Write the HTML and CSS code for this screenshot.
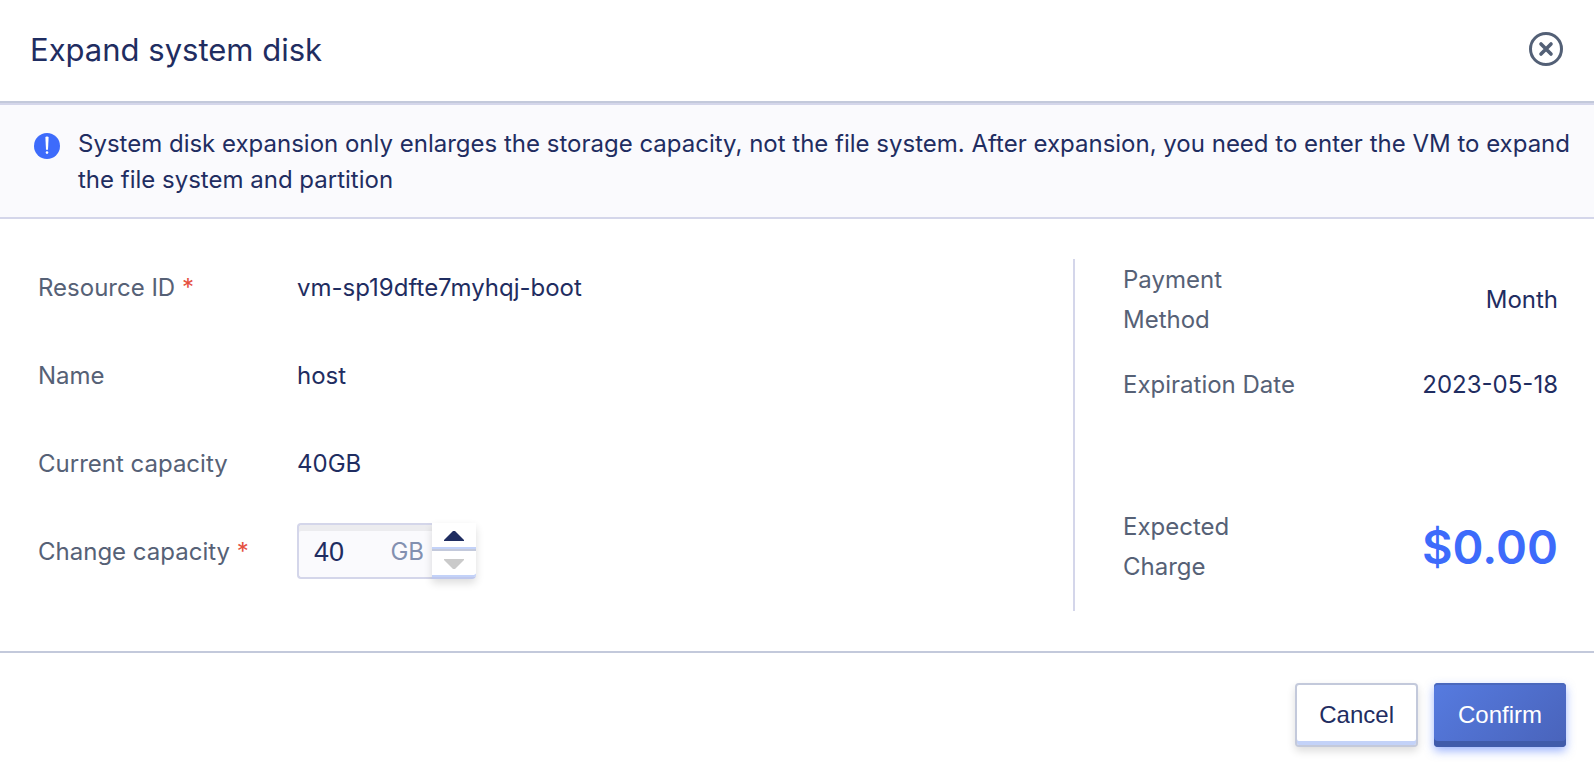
FILE: index.html
```html
<!DOCTYPE html>
<html lang="en">
<head>
<meta charset="utf-8">
<title>Expand system disk</title>
<link rel="stylesheet" href="styles.css">
</head>
<body>
<main class="dialog" role="dialog" aria-labelledby="dialog-title">
  <header class="dialog-header">
    <h1 class="dialog-title" id="dialog-title">Expand system disk</h1>
    <button class="close" type="button" aria-label="Close">
      <svg viewBox="0 0 34 34" width="34" height="34" fill="none" stroke="currentColor">
        <circle cx="17" cy="17" r="15.5" stroke-width="3"/>
        <path d="M12 12l10 10M22 12L12 22" stroke-width="3.6" stroke-linecap="round"/>
      </svg>
    </button>
  </header>
  <div class="notice">
    <svg class="notice-icon" viewBox="0 0 26 26" width="26" height="26" aria-hidden="true">
      <circle cx="13" cy="13" r="13" fill="#3d6bfb"/>
      <path d="M11.4 4.5Q11.4 3.6 13 3.6T14.6 4.5L14 16.8H12Z" fill="#fff"/>
      <circle cx="13" cy="19.6" r="1.3" fill="#fff"/>
    </svg>
    <p class="notice-text">System disk expansion only enlarges the storage capacity, not the file system. After expansion, you need to enter the VM to expand the file system and partition</p>
  </div>
  <div class="dialog-body">
    <form class="form" id="expand-form">
      <div class="row">
        <span class="label">Resource ID <span class="required">*</span></span>
        <span class="value">vm-sp19dfte7myhqj-boot</span>
      </div>
      <div class="row">
        <span class="label">Name</span>
        <span class="value">host</span>
      </div>
      <div class="row">
        <span class="label">Current capacity</span>
        <span class="value">40GB</span>
      </div>
      <div class="row">
        <label class="label" for="capacity">Change capacity <span class="required">*</span></label>
        <div class="stepper">
          <div class="field">
            <input class="field-input" id="capacity" type="text" inputmode="numeric" value="40">
            <span class="unit">GB</span>
          </div>
          <div class="steps">
            <button class="step" type="button" aria-label="Increase">
              <svg viewBox="0 0 20 10" width="20" height="10"><path d="M0 10V9L9 0H11L20 9V10Z" fill="#1f2d61"/></svg>
            </button>
            <button class="step step-down" type="button" aria-label="Decrease" disabled>
              <svg viewBox="0 0 20 10" width="20" height="10"><path d="M0 0V1L9 10H11L20 1V0Z" fill="#cacaca"/></svg>
            </button>
          </div>
        </div>
      </div>
    </form>
    <aside class="summary">
      <div class="summary-row">
        <span class="summary-label">Payment Method</span>
        <span>Month</span>
      </div>
      <div class="summary-row">
        <span class="summary-label">Expiration Date</span>
        <span>2023-05-18</span>
      </div>
      <div class="summary-row summary-total">
        <span class="summary-label">Expected Charge</span>
        <span class="price">$0.00</span>
      </div>
    </aside>
  </div>
  <footer class="dialog-footer">
    <button class="button" type="button">Cancel</button>
    <button class="button button-primary" type="submit" form="expand-form">Confirm</button>
  </footer>
</main>
</body>
</html>
```

FILE: styles.css
```css
* {
  box-sizing: border-box;
}

body {
  margin: 0;
  background: #fff;
  color: #1f2d61;
  font-family: Inter, "Liberation Sans", sans-serif;
  font-size: 24px;
  line-height: 40px;
}

button {
  padding: 0;
  border: 0;
  background: none;
  cursor: pointer;
}

svg {
  display: block;
}

.dialog {
  display: flex;
  flex-direction: column;
}

.dialog-header {
  display: flex;
  align-items: flex-end;
  justify-content: space-between;
  padding: 30px 31px 31px 30px;
  border-bottom: 2px solid #c3c9db;
}

.dialog-title {
  margin: 0;
  font-size: 31px;
  font-weight: 400;
  line-height: 40px;
}

.close {
  margin-bottom: 4px;
  color: #536076;
}

.notice {
  display: flex;
  gap: 18px;
  padding: 21px 24px 19px 34px;
  border-top: 2px solid #d4d6ea;
  border-bottom: 2px solid #d4d6ea;
  background: #fafafd;
}

.notice-icon {
  flex: none;
  margin-top: 7px;
}

.notice-text {
  margin: 0;
  line-height: 36px;
}

.dialog-body {
  display: flex;
  padding: 40px 36px 40px 38px;
}

.form {
  flex: 1;
  display: flex;
  flex-direction: column;
  gap: 32px;
  padding-bottom: 32px;
}

.row {
  display: flex;
  align-items: center;
  height: 56px;
}

.label,
.value {
  padding-top: 2px;
}

.label {
  flex: none;
  width: 259px;
  color: #566176;
}

.required {
  color: #e5503f;
}

.stepper {
  display: flex;
  width: 179px;
  height: 56px;
}

.field {
  flex: 1;
  display: flex;
  align-items: center;
  min-width: 0;
  padding: 2px 8px 0 15px;
  border: 2px solid #d4d6ea;
  border-right: 0;
  border-radius: 4px 0 0 4px;
  background: #fafafd;
  box-shadow: inset 0 6px #ececef;
}

.field-input {
  flex: 1;
  width: 100%;
  min-width: 0;
  padding: 0;
  border: 0;
  outline: 0;
  background: none;
  color: #1f2d61;
  font: 27px "Liberation Sans", Arial, sans-serif;
}

.unit {
  color: #8290b0;
}

.steps {
  flex: none;
  display: flex;
  flex-direction: column;
  width: 44px;
  border-radius: 0 4px 4px 0;
  box-shadow: 0 4px 8px #00000024;
}

.step {
  display: flex;
  align-items: center;
  justify-content: center;
  height: 28px;
  border-bottom: 2px solid #c3c9db;
  background: #fff;
  box-shadow: inset 0 -2px #c3d2f8;
}

.step-down {
  border-bottom-color: #bfc8ec;
  border-radius: 0 0 4px 0;
}

.summary {
  display: flex;
  flex-direction: column;
  width: 485px;
  padding-top: 1px;
  padding-left: 48px;
  border-left: 2px solid #d4d6ea;
}

.summary-row {
  display: flex;
  align-items: center;
  justify-content: space-between;
  margin-bottom: 25px;
}

.summary-total {
  margin-top: auto;
  margin-bottom: 24px;
}

.summary-label {
  width: 178px;
  color: #566176;
}

.price {
  color: #3d6bfb;
  font-size: 47px;
  font-weight: 600;
}

.dialog-footer {
  display: flex;
  justify-content: flex-end;
  gap: 16px;
  padding: 30px 28px;
  border-top: 2px solid #c3c9db;
}

.button {
  height: 64px;
  padding: 0 22px;
  border: 2px solid #c3c9db;
  border-radius: 4px;
  background: #fff;
  box-shadow: inset 0 -4px #c3d2f8, 0 4px 8px #00000024;
  color: #1f2d61;
  font: 24px "Liberation Sans", Arial, sans-serif;
}

.button-primary {
  padding: 0 24px;
  border: 0;
  background: linear-gradient(135deg, #567be0, #4963ba);
  box-shadow: inset 0 2px #4a68bd, inset 0 -6px #405baa, 0 4px 10px #3d6bfb80;
  color: #fff;
}
```
